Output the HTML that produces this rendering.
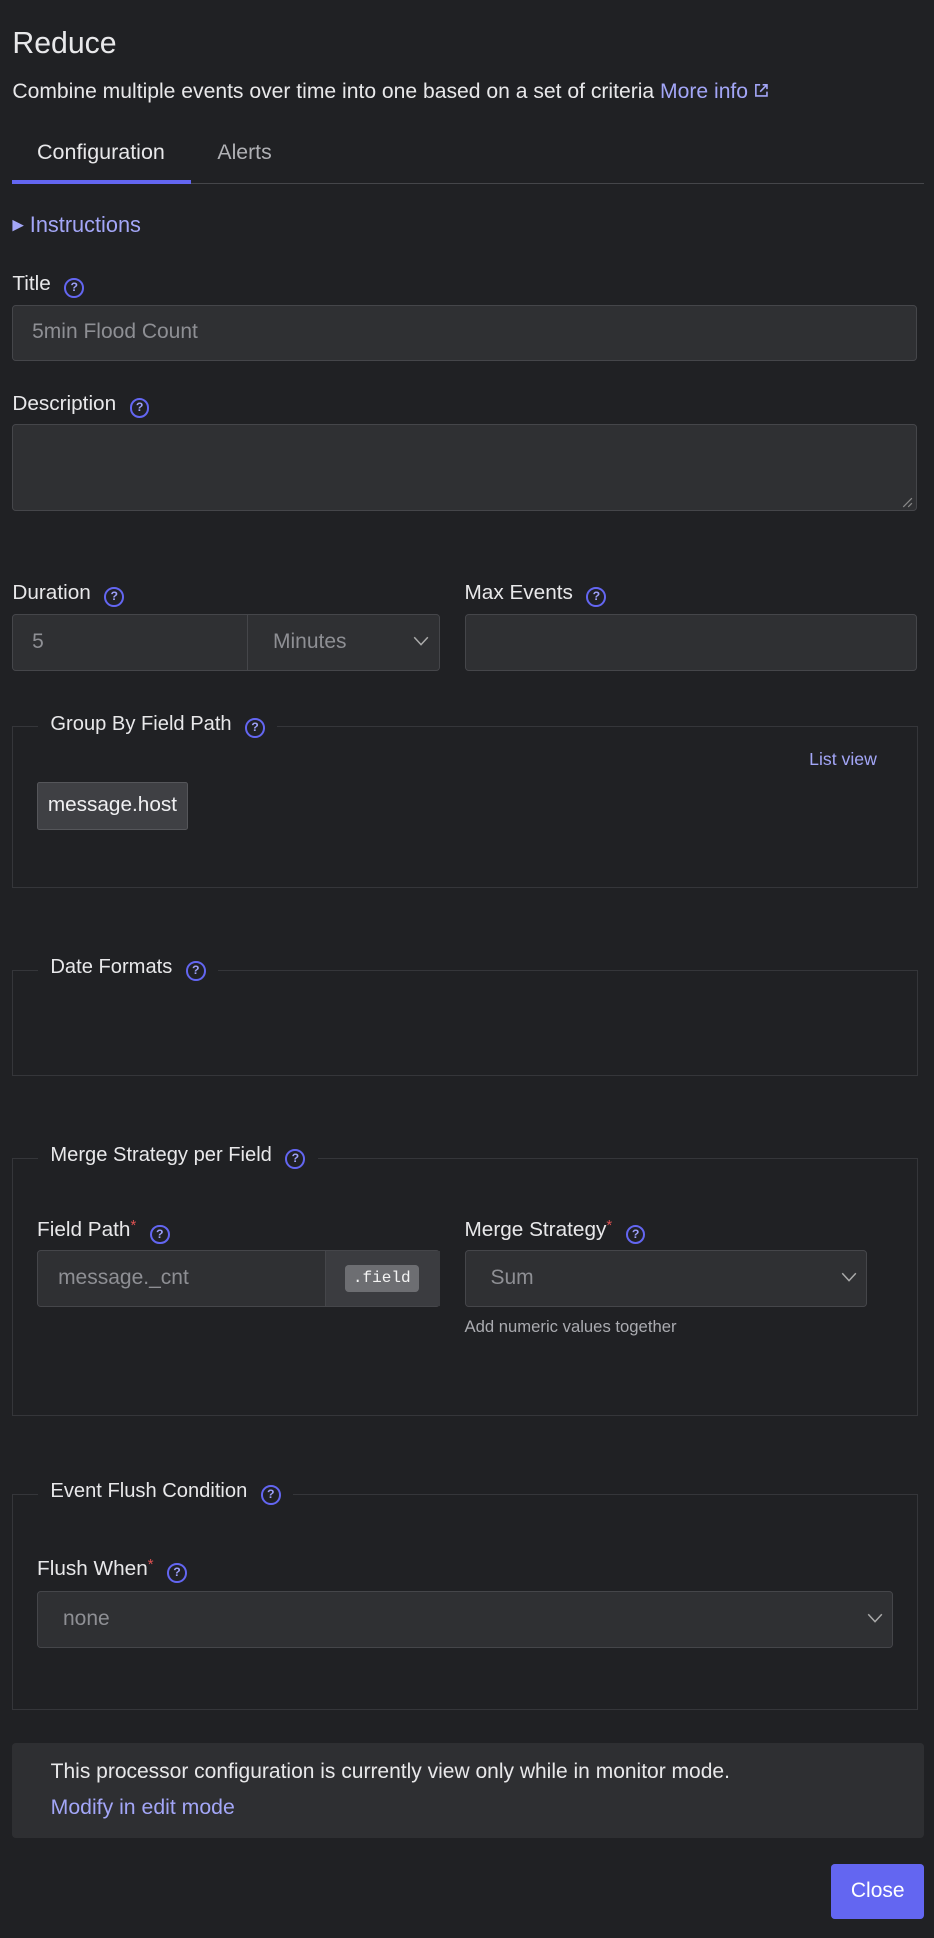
<!DOCTYPE html>
<html><head><meta charset="utf-8"><style>
html,body{margin:0;padding:0;background:#202124;}
body{width:934px;height:1938px;overflow:hidden;}
#w{zoom:1.2354;width:756px;height:1569px;position:relative;font-family:"Liberation Sans",sans-serif;color:#e8e8ea;}
.a{position:absolute;white-space:nowrap;}
.lbl{font-size:16.8px;color:#e8e8ea;}
.q{display:inline-block;width:16px;height:16px;border:2px solid #6366f1;border-radius:50%;box-sizing:border-box;color:#9da0f8;font-size:10px;font-weight:bold;text-align:center;line-height:12px;vertical-align:-1px;margin-left:11px;}
.inp{position:absolute;background:#2f3033;border:1px solid #45464a;border-radius:3px;box-sizing:border-box;}
.ph{position:absolute;color:#8e8f94;font-size:17px;}
.fs{position:absolute;border:1px solid #35363a;box-sizing:border-box;}
.lg{position:absolute;background:#202124;padding:0 10px;font-size:16.3px;top:-12px;left:20px;}
.chev{position:absolute;}
.star{color:#e05252;font-size:12px;vertical-align:5px;}
.link{color:#a3a6f7;}
</style></head><body><div id="w">
<div class="a" style="left:10px;top:22px;font-size:24.5px;">Reduce</div>
<div class="a" style="left:10px;top:65px;font-size:17.1px;">Combine multiple events over time into one based on a set of criteria <span class="link">More info</span> <svg width="12" height="12" viewBox="0 0 12 12" style="vertical-align:0"><path d="M5 1.5H1.5v9h9V7M7 1.5h3.5V5M10.5 1.5L5 7" fill="none" stroke="#a3a6f7" stroke-width="1.3"/></svg></div>
<div class="a" style="left:30px;top:113px;font-size:17.4px;">Configuration</div>
<div class="a" style="left:176px;top:113px;font-size:17.2px;color:#b0b1b5;">Alerts</div>
<div class="a" style="left:10px;top:148px;width:738px;height:1px;background:#45464a;"></div>
<div class="a" style="left:10px;top:146px;width:145px;height:3px;background:#6366f1;"></div>
<div class="a link" style="left:10px;top:172px;font-size:17.6px;"><span style="font-size:12px;vertical-align:2px;">&#9654;</span> Instructions</div>
<div class="a lbl" style="left:10px;top:220px;">Title<span class="q">?</span></div>
<div class="inp" style="left:10px;top:247px;width:732px;height:45px;"></div>
<div class="ph" style="left:26px;top:259px;">5min Flood Count</div>
<div class="a lbl" style="left:10px;top:317px;">Description<span class="q">?</span></div>
<div class="inp" style="left:10px;top:343px;width:732px;height:71px;"></div>
<svg class="a" style="left:730px;top:402px" width="9" height="9"><path d="M1 8L8 1M5 8L8 5" stroke="#888" stroke-width="1"/></svg>
<div class="a lbl" style="left:10px;top:470px;">Duration<span class="q">?</span></div>
<div class="inp" style="left:10px;top:497px;width:346px;height:46px;"></div>
<div class="a" style="left:200px;top:497px;width:1px;height:46px;background:#45464a;"></div>
<div class="ph" style="left:26px;top:510px;">5</div>
<div class="ph" style="left:221px;top:510px;">Minutes</div>
<svg class="chev" style="left:334px;top:515px" width="13" height="8"><path d="M1 1l5.5 6L12 1" fill="none" stroke="#aaa" stroke-width="1.2"/></svg>
<div class="a lbl" style="left:376px;top:470px;">Max Events<span class="q">?</span></div>
<div class="inp" style="left:376px;top:497px;width:366px;height:46px;"></div>

<div class="fs" style="left:10px;top:588px;width:733px;height:131px;"><div class="lg">Group By Field Path<span class="q">?</span></div></div>
<div class="a link" style="left:655px;top:606px;font-size:14.3px;">List view</div>
<div class="a" style="left:30px;top:633px;width:122px;height:39px;background:#3f4044;border:1px solid #55565a;border-radius:2px;box-sizing:border-box;font-size:16.8px;line-height:36px;text-align:center;color:#f0f0f2;">message.host</div>

<div class="fs" style="left:10px;top:785px;width:733px;height:86px;"><div class="lg">Date Formats<span class="q">?</span></div></div>

<div class="fs" style="left:10px;top:937px;width:733px;height:209px;"><div class="lg">Merge Strategy per Field<span class="q">?</span></div></div>
<div class="a lbl" style="left:30px;top:986px;">Field Path<span class="star">*</span><span class="q">?</span></div>
<div class="inp" style="left:30px;top:1012px;width:326px;height:46px;"></div>
<div class="a" style="left:263px;top:1013px;width:92px;height:44px;background:#3b3c40;border-left:1px solid #45464a;"></div>
<div class="a" style="left:279px;top:1024px;width:60px;height:22px;background:#6d6e72;border-radius:3px;font-family:'Liberation Mono',monospace;font-size:13px;line-height:22px;text-align:center;color:#f4f4f4;">.field</div>
<div class="ph" style="left:47px;top:1025px;">message._cnt</div>
<div class="a lbl" style="left:376px;top:986px;">Merge Strategy<span class="star">*</span><span class="q">?</span></div>
<div class="inp" style="left:376px;top:1012px;width:326px;height:46px;"></div>
<div class="ph" style="left:397px;top:1025px;">Sum</div>
<svg class="chev" style="left:681px;top:1030px" width="13" height="8"><path d="M1 1l5.5 6L12 1" fill="none" stroke="#aaa" stroke-width="1.2"/></svg>
<div class="a" style="left:376px;top:1066px;font-size:13.5px;color:#aaabb0;">Add numeric values together</div>

<div class="fs" style="left:10px;top:1209px;width:733px;height:175px;"><div class="lg">Event Flush Condition<span class="q">?</span></div></div>
<div class="a lbl" style="left:30px;top:1260px;">Flush When<span class="star">*</span><span class="q">?</span></div>
<div class="inp" style="left:30px;top:1288px;width:693px;height:46px;"></div>
<div class="ph" style="left:51px;top:1301px;">none</div>
<svg class="chev" style="left:702px;top:1306px" width="13" height="8"><path d="M1 1l5.5 6L12 1" fill="none" stroke="#aaa" stroke-width="1.2"/></svg>

<div class="a" style="left:10px;top:1411px;width:738px;height:77px;background:#2e2f32;border-radius:3px;"></div>
<div class="a" style="left:41px;top:1425px;font-size:17px;">This processor configuration is currently view only while in monitor mode.</div>
<div class="a link" style="left:41px;top:1453px;font-size:17.2px;">Modify in edit mode</div>
<div class="a" style="left:673px;top:1509px;width:75px;height:44px;background:#6366f1;border-radius:3px;font-size:17px;line-height:44px;text-align:center;color:#fff;">Close</div>
</div></body></html>
